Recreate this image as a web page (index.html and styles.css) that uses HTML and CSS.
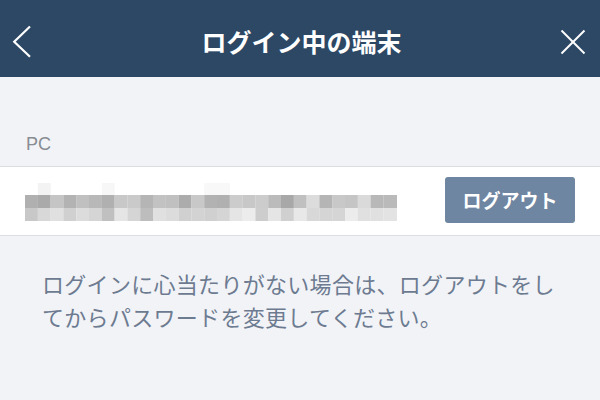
FILE: index.html
```html
<!DOCTYPE html>
<html lang="ja">
<head>
<meta charset="utf-8">
<title>ログイン中の端末</title>
<link rel="stylesheet" href="styles.css">
</head>
<body>
<header class="nav">
  <div class="nav-side nav-left">
    <svg class="icon-back" width="20" height="34" viewBox="0 0 20 34" aria-hidden="true">
      <polyline points="18,1.5 2.2,16.8 18,31.8" fill="none" stroke="#ffffff" stroke-width="2.2" stroke-linecap="butt" stroke-linejoin="miter"/>
    </svg>
  </div>
  <h1 class="nav-title">ログイン中の端末</h1>
  <div class="nav-side nav-right">
    <svg class="icon-close" width="26" height="26" viewBox="0 0 26 26" aria-hidden="true">
      <line x1="1.5" y1="1.5" x2="24.5" y2="24.5" stroke="#ffffff" stroke-width="2"/>
      <line x1="24.5" y1="1.5" x2="1.5" y2="24.5" stroke="#ffffff" stroke-width="2"/>
    </svg>
  </div>
</header>

<main class="content">
  <div class="section-label">PC</div>
  <div class="device-row">
    <svg class="device-name" width="372" height="39" viewBox="0 0 372 39" aria-label="端末名">
      <g class="mosaic-top">
        <rect x="12.8" y="0" width="12.9" height="12" fill="#f3f3f3"/>
        <rect x="76.8" y="0" width="12.9" height="12" fill="#f7f7f7"/>
        <rect x="179.2" y="0" width="25.7" height="12" fill="#f8f8f8"/>
      </g>
      <g class="mosaic-mid">
        <rect x="0" y="12" width="12.9" height="13" fill="#b0b0b0"/>
        <rect x="12.8" y="12" width="12.9" height="13" fill="#aaaaaa"/>
        <rect x="25.6" y="12" width="12.9" height="13" fill="#c5c5c5"/>
        <rect x="38.4" y="12" width="12.9" height="13" fill="#b3b3b3"/>
        <rect x="51.2" y="12" width="12.9" height="13" fill="#c0c0c0"/>
        <rect x="64" y="12" width="12.9" height="13" fill="#b8b8b8"/>
        <rect x="76.8" y="12" width="12.9" height="13" fill="#b0b0b0"/>
        <rect x="89.6" y="12" width="12.9" height="13" fill="#c8c8c8"/>
        <rect x="102.4" y="12" width="12.9" height="13" fill="#cacaca"/>
        <rect x="115.2" y="12" width="12.9" height="13" fill="#b5b5b5"/>
        <rect x="128" y="12" width="12.9" height="13" fill="#c2c2c2"/>
        <rect x="140.8" y="12" width="12.9" height="13" fill="#c0c0c0"/>
        <rect x="153.6" y="12" width="12.9" height="13" fill="#acacac"/>
        <rect x="166.4" y="12" width="12.9" height="13" fill="#c8c8c8"/>
        <rect x="179.2" y="12" width="12.9" height="13" fill="#b2b2b2"/>
        <rect x="192" y="12" width="12.9" height="13" fill="#b0b0b0"/>
        <rect x="204.8" y="12" width="12.9" height="13" fill="#cccccc"/>
        <rect x="217.6" y="12" width="12.9" height="13" fill="#c8c8c8"/>
        <rect x="230.4" y="12" width="12.9" height="13" fill="#cccccc"/>
        <rect x="243.2" y="12" width="12.9" height="13" fill="#bbbbbb"/>
        <rect x="256" y="12" width="12.9" height="13" fill="#a8a8a8"/>
        <rect x="268.8" y="12" width="12.9" height="13" fill="#c0c0c0"/>
        <rect x="281.6" y="12" width="12.9" height="13" fill="#dcdcdc"/>
        <rect x="294.4" y="12" width="12.9" height="13" fill="#b5b5b5"/>
        <rect x="307.2" y="12" width="12.9" height="13" fill="#c8c8c8"/>
        <rect x="320" y="12" width="12.9" height="13" fill="#c5c5c5"/>
        <rect x="332.8" y="12" width="12.9" height="13" fill="#dadada"/>
        <rect x="345.6" y="12" width="12.9" height="13" fill="#b8b8b8"/>
        <rect x="358.4" y="12" width="13.6" height="13" fill="#bababa"/>
      </g>
      <g class="mosaic-low">
        <rect x="0" y="25" width="12.9" height="13" fill="#c8c8c8"/>
        <rect x="12.8" y="25" width="12.9" height="13" fill="#d8d8d8"/>
        <rect x="25.6" y="25" width="12.9" height="13" fill="#e0e0e0"/>
        <rect x="38.4" y="25" width="12.9" height="13" fill="#d0d0d0"/>
        <rect x="51.2" y="25" width="12.9" height="13" fill="#dcdcdc"/>
        <rect x="64" y="25" width="12.9" height="13" fill="#d5d5d5"/>
        <rect x="76.8" y="25" width="12.9" height="13" fill="#c0c0c0"/>
        <rect x="89.6" y="25" width="12.9" height="13" fill="#e5e5e5"/>
        <rect x="102.4" y="25" width="12.9" height="13" fill="#d5d5d5"/>
        <rect x="115.2" y="25" width="12.9" height="13" fill="#bdbdbd"/>
        <rect x="128" y="25" width="12.9" height="13" fill="#e0e0e0"/>
        <rect x="140.8" y="25" width="12.9" height="13" fill="#dcdcdc"/>
        <rect x="153.6" y="25" width="12.9" height="13" fill="#d0d0d0"/>
        <rect x="166.4" y="25" width="12.9" height="13" fill="#d3d3d3"/>
        <rect x="179.2" y="25" width="12.9" height="13" fill="#d0d0d0"/>
        <rect x="192" y="25" width="12.9" height="13" fill="#d5d5d5"/>
        <rect x="204.8" y="25" width="12.9" height="13" fill="#e5e5e5"/>
        <rect x="217.6" y="25" width="12.9" height="13" fill="#ececec"/>
        <rect x="230.4" y="25" width="12.9" height="13" fill="#cdcdcd"/>
        <rect x="243.2" y="25" width="12.9" height="13" fill="#e5e5e5"/>
        <rect x="256" y="25" width="12.9" height="13" fill="#d0d0d0"/>
        <rect x="268.8" y="25" width="12.9" height="13" fill="#e8e8e8"/>
        <rect x="281.6" y="25" width="12.9" height="13" fill="#d8d8d8"/>
        <rect x="294.4" y="25" width="12.9" height="13" fill="#d5d5d5"/>
        <rect x="307.2" y="25" width="12.9" height="13" fill="#d5d5d5"/>
        <rect x="320" y="25" width="12.9" height="13" fill="#ececec"/>
        <rect x="332.8" y="25" width="12.9" height="13" fill="#e0e0e0"/>
        <rect x="345.6" y="25" width="12.9" height="13" fill="#e0e0e0"/>
        <rect x="358.4" y="25" width="13.6" height="13" fill="#e3e3e3"/>
      </g>
    </svg>
    <button class="logout-btn" type="button">ログアウト</button>
  </div>
  <p class="notice">ログインに心当たりがない場合は、ログアウトをしてからパスワードを変更してください。</p>
</main>
</body>
</html>
```

FILE: styles.css
```css
* {
  box-sizing: border-box;
}

html, body {
  margin: 0;
  padding: 0;
}

body {
  width: 600px;
  height: 400px;
  overflow: hidden;
  background: #f2f3f7;
  font-family: "Noto Sans CJK JP", "Noto Sans", sans-serif;
}

.nav {
  height: 77px;
  background: #2c4865;
  display: flex;
  align-items: center;
  padding: 6px 14px 0 12px;
}

.nav-side {
  width: 40px;
  display: flex;
  align-items: center;
}

.nav-right {
  justify-content: flex-end;
}

.icon-back,
.icon-close {
  display: block;
}

.nav-title {
  flex: 1;
  margin: 0;
  padding-left: 5px;
  text-align: center;
  color: #ffffff;
  font-size: 25px;
  line-height: 25px;
  font-weight: 700;
}

.content {
  display: flex;
  flex-direction: column;
}

.section-label {
  padding: 57px 26px 12px;
  font-family: "Liberation Sans", Arial, sans-serif;
  font-size: 18px;
  line-height: 20px;
  color: #888b92;
}

.device-row {
  height: 70px;
  background: #ffffff;
  border-top: 1px solid #dcdde2;
  border-bottom: 1px solid #dcdde2;
  display: flex;
  align-items: center;
  justify-content: space-between;
  padding: 0 25px 0 25px;
}

.device-name {
  display: block;
  margin-top: 3px;
}

.logout-btn {
  width: 130px;
  height: 46px;
  border: none;
  border-radius: 3px;
  background: #6f86a2;
  color: #ffffff;
  font-family: "Noto Sans CJK JP", sans-serif;
  font-size: 19px;
  font-weight: 700;
  line-height: 46px;
  padding: 0;
  margin-top: -2px;
}

.notice {
  margin: 31px 0 0;
  padding: 0 38px 0 42px;
  font-size: 22px;
  line-height: 33px;
  letter-spacing: 0.3px;
  color: #6d7b91;
}
```
